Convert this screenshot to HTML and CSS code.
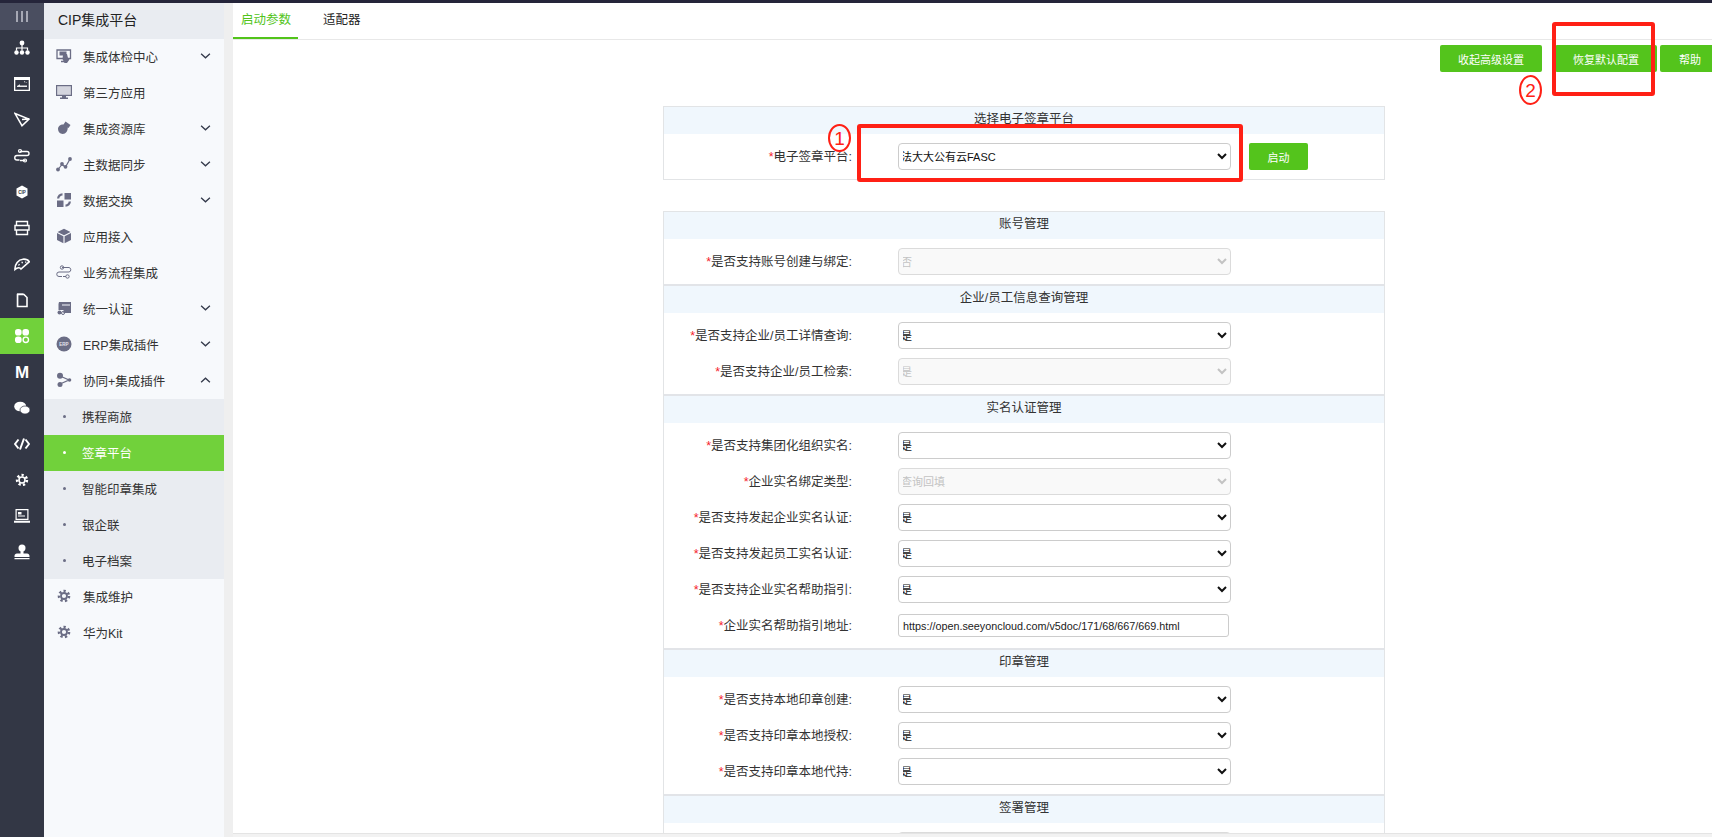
FILE: index.html
```html
<!DOCTYPE html>
<html>
<head>
  <title>CIP集成平台</title>
  <meta charset="UTF-8">
  <link rel="stylesheet" href="styles.css">
</head>
<body>
  <div class="top-bar"></div>
  <div class="layout">
    <div class="rail">
      <div class="rail-toggle"><i></i><i></i><i></i></div>
      <div class="rail-item"><svg viewBox="0 0 16 16"><circle cx="8" cy="3" r="2.4"/><path d="M7.4 5h1.2v2.4h5.5v3h-1.2V8.6H8.6v1.8H7.4V8.6H3.1v1.8H1.9v-3h5.5z"/><circle cx="2.5" cy="12.5" r="2.2"/><circle cx="8" cy="12.5" r="2.2"/><circle cx="13.5" cy="12.5" r="2.2"/></svg></div>
      <div class="rail-item"><svg viewBox="0 0 16 16"><path fill-rule="evenodd" d="M0 1h16v14H0zM1.3 4v9.7h13.4V4z"/><path d="M3 6.2h7V5l3 1.9H3zM13 9.4H6v-1.2L3 10.1h10zM3 10.1h10v.8H3zM3 6.9h10v-.7H3z" opacity=".9"/></svg></div>
      <div class="rail-item"><svg viewBox="0 0 16 16"><path class="line" d="M1 1.5l14 5.6-7 6.6zM8 7.5l7-.4" stroke-width="1.5"/></svg></div>
      <div class="rail-item"><svg viewBox="0 0 16 16"><path class="line" d="M5.5 3.5h7.5a2 2 0 0 1 0 4H3a2.2 2.2 0 0 0 0 4.5h2.5M6 12.5h5.5M6.5 3.5h1" stroke-width="1.4"/><circle class="line" cx="6" cy="3" r="1.5" stroke-width="1.2"/><circle class="line" cx="11" cy="12.5" r="1.5" stroke-width="1.2"/></svg></div>
      <div class="rail-item"><svg viewBox="0 0 16 16"><path d="M8 1.5l5.5 3v7L8 14.5l-5.5-3v-7z"/><text class="cip-text" x="8" y="9.6">CIP</text></svg></div>
      <div class="rail-item"><svg viewBox="0 0 16 16"><path class="line" d="M2.5 1.500h11v4h-11zM1 5.500h14v4.500H1zM2.500 10h11v4.500h-11z" stroke-width="1.4"/></svg></div>
      <div class="rail-item"><svg viewBox="0 0 16 16"><path class="line" d="M1 13.500C.6 8 4.500 3.500 9 3.200c2.600-.2 5 .7 6.300 2.500L7 13c-.8-1.600-3.500-1.800-6 .5z" stroke-width="1.6"/><path class="line" d="M4.500 9.500l1-1.500M8 7.200l.4-1.400M11.300 6.600l1-.8" stroke-width="1.3"/></svg></div>
      <div class="rail-item"><svg viewBox="0 0 16 16"><path d="M3 1h6.500v1.200H4.200V15H3z" fill="#a9abb5"/><path class="line" d="M3.500 2.500h6.500l3 3v9H3.500z" stroke-width="1.6"/></svg></div>
      <div class="rail-item active"><svg viewBox="0 0 16 16"><rect x="1" y="1" width="6.6" height="6.6" rx="2.8"/><rect x="8.4" y="1" width="6.6" height="6.6" rx="2.8"/><rect x="1" y="8.4" width="6.6" height="6.6" rx="2.8"/><circle class="line" cx="11.8" cy="11.8" r="2.7" stroke-width="1.4"/></svg></div>
      <div class="rail-item"><svg viewBox="0 0 16 16"><text class="mark-text" x="8" y="14">M</text></svg></div>
      <div class="rail-item"><svg viewBox="0 0 16 16"><ellipse cx="6.2" cy="6.5" rx="6" ry="4.8"/><ellipse cx="11" cy="10" rx="5" ry="4" stroke="#333745" stroke-width=".7"/></svg></div>
      <div class="rail-item"><svg viewBox="0 0 16 16"><path class="line" d="M4.5 3.5L1 8l3.500 4.500M11.500 3.500L15 8l-3.500 4.500M10 2.500L6 13.500" stroke-width="2"/></svg></div>
      <div class="rail-item"><svg viewBox="0 0 16 16"><circle class="line" cx="8" cy="8" r="4.9" stroke-width="2.6" stroke-dasharray="2.2 2.2"/><circle class="line" cx="8" cy="8" r="3" stroke-width="1.6"/></svg></div>
      <div class="rail-item"><svg viewBox="0 0 16 16"><path fill-rule="evenodd" d="M1.5 1h13v11h-13zM2.700 2.200v8.600h10.600V2.200z"/><path d="M0 12.800h16v2H0zM4 4h3.500v2.500H4zM4 7.600h7v.9H4z"/></svg></div>
      <div class="rail-item"><svg viewBox="0 0 16 16"><circle cx="8" cy="4" r="3.500"/><path d="M6.500 6.500h3v3h3.500c1.500 0 2.500 1 2.500 2.500v1H.5v-1c0-1.500 1-2.500 2.500-2.500h3.500zM.5 14h15v1.200H.5z"/></svg></div>
    </div>

    <div class="sidebar">
      <div class="sidebar-title">CIP集成平台</div>
      <div class="menu-row">
        <svg class="menu-icon" viewBox="0 0 16 16"><path class="line" d="M1 2h13.500v8.500H1zM5 13.500h5" stroke-width="1.3"/><path d="M3.500 3.500h7v4h-7zM7 7l4-1 1 4 1.500 1.500-2.500 3.500H8.500L6.500 11z"/></svg>
        <span class="menu-text">集成体检中心</span>
        <svg class="chevron" viewBox="0 0 12 8"><path d="M1.200 1.500L6 6l4.800-4.500"/></svg>
      </div>
      <div class="menu-row">
        <svg class="menu-icon" viewBox="0 0 16 16"><path fill-rule="evenodd" d="M0 1h16v11H0zM1.200 2.200v8.600h13.600V2.200z"/><path d="M6 12h4v1.500h2V15H4v-1.500h2z"/><path d="M1.200 2.200h13.600v8.600H1.200z" opacity=".25"/></svg>
        <span class="menu-text">第三方应用</span>
      </div>
      <div class="menu-row">
        <svg class="menu-icon" viewBox="0 0 16 16"><path d="M9.500 1.500l5 3.500-2 3-.8-.4c.2 3.400-1.800 6.400-5 6.400a5.300 5.300 0 0 1-4.700-5c0-3 2.500-4.800 5.500-4.600z"/></svg>
        <span class="menu-text">集成资源库</span>
        <svg class="chevron" viewBox="0 0 12 8"><path d="M1.200 1.500L6 6l4.800-4.500"/></svg>
      </div>
      <div class="menu-row">
        <svg class="menu-icon" viewBox="0 0 16 16"><path class="line" d="M2 13.500L6 8.500l3.500 2.500L14 3" stroke-width="1.200"/><circle cx="2" cy="13.500" r="1.900"/><circle cx="6" cy="8" r="1.900"/><circle cx="9.500" cy="10.800" r="1.900"/><circle cx="14" cy="3" r="1.900"/></svg>
        <span class="menu-text">主数据同步</span>
        <svg class="chevron" viewBox="0 0 12 8"><path d="M1.200 1.500L6 6l4.800-4.500"/></svg>
      </div>
      <div class="menu-row">
        <svg class="menu-icon" viewBox="0 0 16 16"><path d="M8.500 1H15v6.500H8.500zM1 8.500h6.500V15H1zM6.500 1.200v2.300C4.500 3.700 3.500 4.700 3.300 6.500H1C1.300 3.400 3.400 1.400 6.500 1.200zM9.500 14.800v-2.300c2-.2 3-1.200 3.200-3H15c-.3 3.100-2.400 5.100-5.500 5.300z"/></svg>
        <span class="menu-text">数据交换</span>
        <svg class="chevron" viewBox="0 0 12 8"><path d="M1.200 1.500L6 6l4.800-4.500"/></svg>
      </div>
      <div class="menu-row">
        <svg class="menu-icon" viewBox="0 0 16 16"><path d="M8 .800l6.500 3.200L8 7.300 1.500 4zM1 5l6.400 3.300v7L1 12zM15 5l-6.400 3.300v7L15 12z"/></svg>
        <span class="menu-text">应用接入</span>
      </div>
      <div class="menu-row">
        <svg class="menu-icon" viewBox="0 0 16 16"><path class="line" d="M6 3.500h7a2.300 2.300 0 0 1 0 4.500H3a2.200 2.200 0 0 0 0 4.500h3M7 12.500h3" stroke-width="1"/><circle class="line" cx="6" cy="3.500" r="1.700" stroke-width="1"/><circle class="line" cx="11.500" cy="12.500" r="1.700" stroke-width="1"/></svg>
        <span class="menu-text">业务流程集成</span>
      </div>
      <div class="menu-row">
        <svg class="menu-icon" viewBox="0 0 16 16"><path d="M3 2h12v11H7.500v-3H2.500V4z"/><path d="M6 4.500h8v1H6z" fill="#f7f9fc"/><circle cx="3.500" cy="12.500" r="2"/><circle cx="7" cy="13" r="1.500" fill="none" stroke="#6b6d85"/></svg>
        <span class="menu-text">统一认证</span>
        <svg class="chevron" viewBox="0 0 12 8"><path d="M1.200 1.500L6 6l4.800-4.500"/></svg>
      </div>
      <div class="menu-row">
        <svg class="menu-icon" viewBox="0 0 16 16"><circle cx="8" cy="8" r="7.500"/><text class="erp-text" x="8" y="9.800">ERP</text></svg>
        <span class="menu-text">ERP集成插件</span>
        <svg class="chevron" viewBox="0 0 12 8"><path d="M1.200 1.500L6 6l4.800-4.500"/></svg>
      </div>
      <div class="menu-row">
        <svg class="menu-icon" viewBox="0 0 16 16"><path class="line" d="M4 4l9 4-9 4" stroke-width="1.300"/><circle cx="4" cy="3.800" r="3"/><circle cx="13.500" cy="8" r="1.800"/><circle cx="4" cy="12.500" r="2.500"/></svg>
        <span class="menu-text">协同+集成插件</span>
        <svg class="chevron" viewBox="0 0 12 8"><path d="M1.200 6.500L6 2l4.800 4.500"/></svg>
      </div>
      <div class="submenu">
        <div class="submenu-row"><i class="dot"></i><span>携程商旅</span></div>
        <div class="submenu-row current"><i class="dot"></i><span>签章平台</span></div>
        <div class="submenu-row"><i class="dot"></i><span>智能印章集成</span></div>
        <div class="submenu-row"><i class="dot"></i><span>银企联</span></div>
        <div class="submenu-row"><i class="dot"></i><span>电子档案</span></div>
      </div>
      <div class="menu-row">
        <svg class="menu-icon" viewBox="0 0 16 16"><circle class="line" cx="8" cy="8" r="5" stroke-width="2.600" stroke-dasharray="2.240 2.250"/><circle class="line" cx="8" cy="8" r="3" stroke-width="1.800"/></svg>
        <span class="menu-text">集成维护</span>
      </div>
      <div class="menu-row">
        <svg class="menu-icon" viewBox="0 0 16 16"><circle class="line" cx="8" cy="8" r="5" stroke-width="2.600" stroke-dasharray="2.240 2.250"/><circle class="line" cx="8" cy="8" r="3" stroke-width="1.800"/></svg>
        <span class="menu-text">华为Kit</span>
      </div>
    </div>

    <div class="strip"></div>

    <div class="main">
      <div class="tabs">
        <div class="tab active">启动参数</div>
        <div class="tab">适配器</div>
      </div>
      <div class="content">
        <div class="actions">
          <button class="btn btn-wide">收起高级设置</button>
          <button class="btn btn-wide btn-restore">恢复默认配置</button>
          <button class="btn btn-help">帮助</button>
        </div>

        <div class="panel panel-first">
          <div class="section first">
            <div class="section-head">选择电子签章平台</div>
            <div class="section-body">
              <div class="form-row">
                <label><em>*</em>电子签章平台:</label>
                <select><option>法大大公有云FASC</option></select>
                <button class="btn btn-start">启动</button>
              </div>
            </div>
          </div>
        </div>

        <div class="panel">
          <div class="section first">
            <div class="section-head">账号管理</div>
            <div class="section-body">
              <div class="form-row">
                <label><em>*</em>是否支持账号创建与绑定:</label>
                <select disabled><option>否</option></select>
              </div>
            </div>
          </div>
          <div class="section">
            <div class="section-head">企业/员工信息查询管理</div>
            <div class="section-body">
              <div class="form-row">
                <label><em>*</em>是否支持企业/员工详情查询:</label>
                <select><option>是</option></select>
              </div>
              <div class="form-row">
                <label><em>*</em>是否支持企业/员工检索:</label>
                <select disabled><option>是</option></select>
              </div>
            </div>
          </div>
          <div class="section">
            <div class="section-head">实名认证管理</div>
            <div class="section-body">
              <div class="form-row">
                <label><em>*</em>是否支持集团化组织实名:</label>
                <select><option>是</option></select>
              </div>
              <div class="form-row">
                <label><em>*</em>企业实名绑定类型:</label>
                <select disabled><option>查询回填</option></select>
              </div>
              <div class="form-row">
                <label><em>*</em>是否支持发起企业实名认证:</label>
                <select><option>是</option></select>
              </div>
              <div class="form-row">
                <label><em>*</em>是否支持发起员工实名认证:</label>
                <select><option>是</option></select>
              </div>
              <div class="form-row">
                <label><em>*</em>是否支持企业实名帮助指引:</label>
                <select><option>是</option></select>
              </div>
              <div class="form-row">
                <label><em>*</em>企业实名帮助指引地址:</label>
                <input type="text" value="https://open.seeyoncloud.com/v5doc/171/68/667/669.html">
              </div>
            </div>
          </div>
          <div class="section">
            <div class="section-head">印章管理</div>
            <div class="section-body">
              <div class="form-row">
                <label><em>*</em>是否支持本地印章创建:</label>
                <select><option>是</option></select>
              </div>
              <div class="form-row">
                <label><em>*</em>是否支持印章本地授权:</label>
                <select><option>是</option></select>
              </div>
              <div class="form-row">
                <label><em>*</em>是否支持印章本地代持:</label>
                <select><option>是</option></select>
              </div>
            </div>
          </div>
          <div class="section">
            <div class="section-head">签署管理</div>
            <div class="section-body">
              <div class="form-row">
                <select disabled class="offset-select"><option></option></select>
              </div>
            </div>
          </div>
        </div>
      </div>
      <div class="bottom-bar"></div>
    </div>
  </div>

  <div class="mark-box mark-box-one"></div>
  <div class="mark-box mark-box-two"></div>
  <div class="mark-num mark-num-one">1</div>
  <div class="mark-num mark-num-two">2</div>
</body>
</html>
```

FILE: styles.css
```css
* {
  box-sizing: border-box;
}

html, body {
  height: 100%;
}

body {
  margin: 0;
  overflow: hidden;
  font-family: "Liberation Sans", "Noto Sans CJK SC", sans-serif;
  font-size: 12.5px;
  color: #333;
  background-color: #fff;
}

.top-bar {
  height: 3px;
  background-color: #25253a;
}

.layout {
  display: flex;
  height: calc(100% - 3px);
}

/* icon rail */
.rail {
  flex: 0 0 44px;
  background-color: #333745;
}

.rail-toggle {
  height: 27px;
  display: flex;
  align-items: center;
  justify-content: center;
  gap: 3px;
  background-color: #4a4e60;
}

.rail-toggle i {
  width: 2px;
  height: 11px;
  background-color: #a6a8b4;
}

.rail-item {
  height: 36px;
  display: flex;
  align-items: center;
  justify-content: center;
  padding-bottom: 1px;
}

.rail-item.active {
  background-color: #71d13b;
}

.rail-item svg {
  width: 16px;
  height: 16px;
  fill: #fff;
  stroke: none;
}

.rail-item svg .line {
  fill: none;
  stroke: #fff;
}

.cip-text {
  font-size: 4.5px;
  font-weight: bold;
  text-anchor: middle;
  fill: #333745;
}

.mark-text {
  font-size: 17px;
  font-weight: bold;
  text-anchor: middle;
  fill: #fff;
}

/* sidebar */
.sidebar {
  flex: 0 0 180px;
  background-color: #f7f9fc;
}

.sidebar-title {
  height: 36px;
  line-height: 34px;
  padding-left: 14px;
  color: #222;
  font-size: 14px;
  background-color: #e9ecf1;
}

.menu-row {
  height: 36px;
  display: flex;
  align-items: center;
  padding: 0 0 2px 12px;
}

.menu-icon {
  width: 16px;
  height: 16px;
  margin-right: 11px;
  fill: #6b6d85;
}

.menu-icon .line {
  fill: none;
  stroke: #6b6d85;
}

.erp-text {
  font-size: 4.5px;
  font-weight: bold;
  text-anchor: middle;
  fill: #e6e6ee;
}

.menu-text {
  flex: 1;
}

.chevron {
  width: 11px;
  height: 8px;
  margin-right: 13px;
  fill: none;
  stroke: #33394a;
  stroke-width: 1.4;
}

.submenu {
  background-color: #e9ecf1;
}

.submenu-row {
  height: 36px;
  display: flex;
  align-items: center;
  padding: 0 0 2px 19px;
}

.submenu-row.current {
  color: #fff;
  background-color: #71d13b;
}

.dot {
  width: 3px;
  height: 3px;
  margin-right: 16px;
  border-radius: 50%;
  background-color: #6b6d85;
}

.current .dot {
  background-color: #fff;
}

.strip {
  flex: 0 0 9px;
  background-color: #efefef;
}

/* main area */
.main {
  flex: 1;
  min-width: 0;
  display: flex;
  flex-direction: column;
}

.tabs {
  flex: 0 0 36px;
  display: flex;
  border-bottom: 1px solid #e8e8e8;
}

.tab {
  height: 36px;
  padding: 0 8px;
  line-height: 34px;
  color: #222;
  white-space: nowrap;
}

.tab.active {
  width: 65px;
  color: #52c41a;
  border-bottom: 2px solid #52c41a;
}

.tab + .tab {
  margin-left: 17px;
}

.content {
  flex: 1;
  min-height: 0;
  overflow: hidden;
}

.actions {
  display: flex;
  justify-content: flex-end;
  margin: 5px -8px 0 0;
}

.btn {
  height: 27px;
  padding: 0;
  border: none;
  border-radius: 2px;
  color: #fff;
  font-family: inherit;
  font-size: 11px;
  background-color: #54c41c;
}

.btn-wide {
  width: 102px;
}

.btn-restore {
  margin: 0 3px 0 13px;
}

.btn-help {
  width: 60px;
}

.btn-start {
  width: 59px;
  margin-left: 18px;
}

.panel {
  width: 722px;
  margin: 31px 0 0 430px;
  border: 1px solid #e2e4e6;
}

.panel-first {
  margin-top: 34px;
}

.section {
  border-top: 2px solid #e2e4e8;
}

.section.first {
  border-top: none;
}

.section-head {
  height: 27px;
  line-height: 25px;
  text-align: center;
  background-color: #f0f7fd;
}

.section-body {
  display: flex;
  flex-direction: column;
  gap: 9px;
  padding: 9px 0;
}

.form-row {
  height: 27px;
  display: flex;
  align-items: center;
}

.form-row label {
  width: 188px;
  margin: 0 46px 2px 0;
  text-align: right;
  white-space: nowrap;
}

.form-row label em {
  color: #f5222d;
  font-style: normal;
}

.form-row select {
  width: 333px;
  height: 27px;
  padding: 0;
  border: 1px solid #ccc;
  border-radius: 4px;
  color: #111;
  font-family: inherit;
  font-size: 11px;
  text-indent: -2px;
  background-color: #fff;
}

.form-row select:disabled {
  color: #aaa;
  background-color: #f7f7f7;
}

.offset-select {
  margin-left: 234px;
}

.form-row input {
  width: 331px;
  height: 23px;
  padding: 0 4px;
  border: 1px solid #ccc;
  border-radius: 3px;
  color: #222;
  font-family: inherit;
  font-size: 10.8px;
}

.bottom-bar {
  flex: 0 0 4px;
  border-top: 1px solid #e4e4e4;
  background-color: #f2f2f2;
}

/* red annotations drawn over the screenshot */
.mark-box {
  position: absolute;
  border: 4px solid #ff2015;
  border-radius: 3px;
}

.mark-box-one {
  left: 857px;
  top: 124px;
  width: 386px;
  height: 58px;
}

.mark-box-two {
  left: 1552px;
  top: 22px;
  width: 103px;
  height: 74px;
}

.mark-num {
  position: absolute;
  width: 23px;
  text-align: center;
  border: 2px solid #ff2015;
  border-radius: 50%;
  color: #ff2015;
  font-size: 19px;
}

.mark-num-one {
  left: 828px;
  top: 124px;
  height: 28px;
  line-height: 25px;
}

.mark-num-two {
  left: 1519px;
  top: 75px;
  height: 30px;
  line-height: 27px;
}
```
